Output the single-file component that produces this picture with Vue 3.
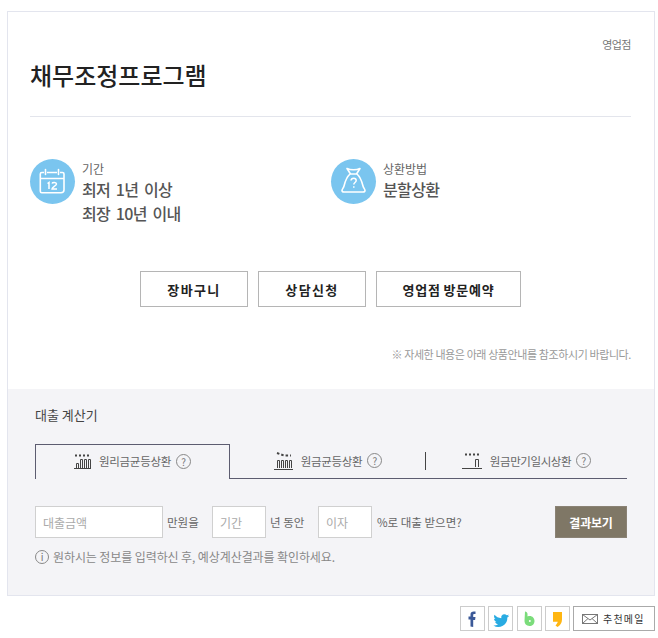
<template>
  <div class="page">
    <section class="card">
      <div class="top">
        <p class="branch">영업점</p>
        <h1 class="title">채무조정프로그램</h1>
        <div class="info">
          <div class="info-item first">
            <span class="round">
              <svg width="45" height="45" viewBox="0 0 45 45" fill="none" stroke="#fff" stroke-width="1.6">
                <path d="M14 13.500h-2.200a1.500 1.500 0 0 0-1.500 1.500v17.200a1.500 1.500 0 0 0 1.500 1.500h19.200a3 3 0 0 0 3-3V15a1.500 1.500 0 0 0-1.500-1.500H30M17 13.500h10M10.500 19.500h23" />
                <path d="M15.500 10.500v5M28.500 10.500v5" stroke-linecap="round" />
                <path d="M17.500 24.500l1.500-1v6.500M22 24.500c.6-1.400 4.500-1.400 4.500.6 0 1.700-4.500 3-4.500 4.800h5" stroke-width="1.500" />
              </svg>
            </span>
            <div>
              <p class="info-label">기간</p>
              <p class="info-value">최저 1년 이상</p>
              <p class="info-value">최장 10년 이내</p>
            </div>
          </div>
          <div class="info-item">
            <span class="round">
              <svg width="45" height="45" viewBox="0 0 45 45" fill="none" stroke="#fff" stroke-width="1.6" stroke-linejoin="round">
                <path d="M16 9.500c2 1 4 1.300 6.500 1.300s4.500-.3 6.500-1.300l-3.500 5.500h-6z" />
                <path d="M19 15c-3.500 3-5 8-6 12-.5 2-2 3-2 4.500 0 1 .7 1.500 2 1.500h19c1.300 0 2-.5 2-1.500 0-1.500-1.500-2.500-2-4.500-1-4-2.500-9-6-12" />
                <path d="M20 21.500c.3-3 5.200-3 5.200 0 0 2-2.400 2-2.400 4M22.800 27.300v1.500" stroke-width="1.500" />
              </svg>
            </span>
            <div>
              <p class="info-label">상환방법</p>
              <p class="info-value strong">분할상환</p>
            </div>
          </div>
        </div>
        <div class="actions">
          <button class="action a1">장바구니</button>
          <button class="action a2">상담신청</button>
          <button class="action a3">영업점 방문예약</button>
        </div>
        <p class="notice">※ 자세한 내용은 아래 상품안내를 참조하시기 바랍니다.</p>
      </div>
      <div class="calc">
        <h2 class="calc-title">대출 계산기</h2>
        <div class="tabs">
          <div class="tab active">
            <svg class="tab-icon" width="17" height="15" viewBox="0 0 17 15" fill="none" stroke="#444">
              <path d="M0 14.500h17" />
              <path d="M2.500 14V9.500h2V14M6.500 14V5.500h2V14M10.500 14V5.500h2V14M14.500 14V5.500h2V14" />
              <path d="M1 1.500h15" stroke-width="2" stroke-dasharray="2 2" />
            </svg>
            <span>원리금균등상환</span>
            <span class="help">?</span>
          </div>
          <div class="tab second">
            <svg class="tab-icon" width="19" height="18" viewBox="0 0 19 18" fill="none" stroke="#444">
              <path d="M0 17.500h19" />
              <path d="M3.500 16V8.500h2V16M7.500 16V8.500h2V16M11.500 16V8.500h2V16M15.500 16V8.500h2V16" />
              <path d="M3 1l7 2.500h7" stroke-width="2" stroke-dasharray="2.500 2" />
            </svg>
            <span>원금균등상환</span>
            <span class="help">?</span>
          </div>
          <div class="tab third">
            <svg class="tab-icon" width="20" height="16" viewBox="0 0 20 16" fill="none" stroke="#444">
              <path d="M0 15.500h20" />
              <path d="M13.500 14V6.500h3V14" />
              <path d="M3 1.500h14" stroke-width="2" stroke-dasharray="2 2" />
            </svg>
            <span>원금만기일시상환</span>
            <span class="help">?</span>
          </div>
        </div>
        <div class="form">
          <input class="field wide" placeholder="대출금액" />
          <span class="unit u1">만원을</span>
          <input class="field short" placeholder="기간" />
          <span class="unit u2">년 동안</span>
          <input class="field short" placeholder="이자" />
          <span class="unit u3">%로 대출 받으면?</span>
          <button class="result">결과보기</button>
        </div>
        <p class="hint"><span class="info-dot">i</span>원하시는 정보를 입력하신 후, 예상계산결과를 확인하세요.</p>
      </div>
    </section>
    <div class="share">
      <a class="sns">
        <svg width="23" height="23" viewBox="0 0 23 23"><path fill="#3b5998" d="M9.500 19.500V12.500H7.500V9.500h2V7.500C9.500 5.300 10.800 4.500 12.800 4.500c.8 0 1.500.1 1.700.1v2.500h-1c-1 0-1.300.5-1.300 1.200v1.700h2.300l-.4 3h-1.900v7z"/></svg>
      </a>
      <a class="sns">
        <svg width="23" height="23" viewBox="0 0 23 23"><path fill="#29abe2" transform="translate(3 4.500) scale(.82)" d="M21 5.200c-.7.300-1.400.5-2.200.6.800-.5 1.400-1.200 1.700-2.100-.8.400-1.600.8-2.500.9a3.900 3.900 0 0 0-6.700 3.500C8 8 5 6.400 3 4c-1 1.800-.5 4 1.200 5.200-.6 0-1.200-.2-1.700-.5 0 1.900 1.300 3.500 3.100 3.900-.6.200-1.200.2-1.800.1.500 1.500 1.900 2.600 3.600 2.700A7.900 7.900 0 0 1 1.700 17a11 11 0 0 0 17-9.800c.9-.5 1.700-1.200 2.300-2z"/></svg>
      </a>
      <a class="sns third-sns">
        <svg width="23" height="23" viewBox="0 0 23 23"><path fill="#7bdc7b" d="M7 4.500c1.300 0 2.500 1 2.500 2.500v2.500c.8-.4 1.500-.5 2.300-.5 2.600 0 4.700 2.300 4.700 5 0 3-2.200 5-5 5-3.100 0-5-2.200-5-5.200z"/><circle cx="11.800" cy="14" r="1" fill="#fff"/></svg>
      </a>
      <a class="sns">
        <svg width="23" height="23" viewBox="0 0 23 23"><path fill="#ffb612" d="M7 5h9v7.500c0 3.500-2 6-4.500 7.500l-2-1.500c1.200-1.300 2-2.400 2.200-3.700H7z"/></svg>
      </a>
      <a class="mail">
        <svg width="16" height="10" viewBox="0 0 16 10" fill="none" stroke="#777"><rect x=".5" y=".5" width="15" height="9"/><path d="M.5.500l7.500 5.500 7.500-5.500M.5 9.500l5.500-5M15.500 9.500l-5.500-5"/></svg>
        <span>추천메일</span>
      </a>
    </div>
  </div>
</template>

<script setup>
</script>

<style>
html, body { margin: 0; background: #fff; }
</style>

<style scoped>
.page {
  width: 658px;
  height: 638px;
  padding: 11px 3px 0 7px;
  box-sizing: border-box;
  font-family: "Noto Sans CJK KR", "Noto Sans", sans-serif;
  color: #555;
  overflow: hidden;
}
p, h1, h2 { margin: 0; }
.card {
  width: 648px;
  height: 585px;
  box-sizing: border-box;
  border: 1px solid #e3e5ee;
  display: flex;
  flex-direction: column;
}
.top {
  height: 377px;
  box-sizing: border-box;
  padding: 24px 23px 0 22px;
}
.branch {
  text-align: right;
  font-size: 11px;
  line-height: 16px;
  color: #777;
  letter-spacing: -0.5px;
}
.title {
  margin-top: 7px;
  height: 57px;
  border-bottom: 1px solid #e3e5ec;
  font-size: 24px;
  line-height: 32px;
  font-weight: 500;
  color: #222;
}
.info {
  display: flex;
  margin-top: 42px;
}
.info-item {
  display: flex;
  gap: 7px;
  align-items: flex-start;
  height: 68px;
}
.info-item.first { width: 301px; }
.round {
  width: 45px;
  height: 45px;
  border-radius: 50%;
  background: #7ac5ef;
  flex: none;
  display: block;
}
.round svg { display: block; }
.info-label {
  font-size: 12px;
  line-height: 16px;
  color: #666;
  margin-top: 2px;
}
.info-value {
  font-size: 16px;
  line-height: 24px;
  font-weight: 500;
  color: #555;
  letter-spacing: -0.6px;
  word-spacing: 2.500px;
}
.actions {
  display: flex;
  justify-content: center;
  gap: 10px;
  margin-top: 44px;
}
.action {
  height: 36px;
  padding: 0;
  background: #fff;
  border: 1px solid #b5b5b5;
  font-family: inherit;
  font-size: 13px;
  font-weight: 700;
  letter-spacing: 1.400px;
  color: #222;
}
.a1 { width: 108px; }
.a2 { width: 108px; }
.a3 { width: 145px; letter-spacing: .8px; word-spacing: -1px; }
.notice {
  margin-top: 39px;
  text-align: right;
  font-size: 11px;
  line-height: 16px;
  color: #999;
  letter-spacing: -0.4px;
}
.calc {
  flex: 1;
  background: #f4f4f7;
  padding: 0 27px 0 27px;
}
.calc-title {
  margin-top: 17px;
  font-size: 13px;
  line-height: 18px;
  font-weight: 400;
  color: #444;
}
.tabs {
  display: flex;
  margin-top: 20px;
  height: 35px;
  box-sizing: border-box;
  border-bottom: 1px solid #5c5c70;
  font-size: 11.500px;
  color: #666;
}
.tab {
  display: flex;
  align-items: center;
  justify-content: center;
  height: 35px;
  box-sizing: border-box;
  padding-bottom: 2px;
  letter-spacing: -0.3px;
}
.tab-icon { margin-right: 8px; flex: none; }
.tab.active {
  width: 195px;
  border: 1px solid #5c5c70;
  border-bottom: 0;
  background: #f4f4f7;
}
.tab.second {
  width: 196px;
  position: relative;
}
.tab.second::after {
  content: "";
  position: absolute;
  right: 0;
  top: 8px;
  height: 18px;
  width: 1px;
  background: #444;
}
.tab.third { flex: 1; letter-spacing: -0.4px; }
.help {
  width: 13px;
  height: 13px;
  border: 1px solid #888;
  border-radius: 50%;
  margin-left: 5px;
  font-size: 10px;
  line-height: 13px;
  text-align: center;
  color: #777;
}
.form {
  display: flex;
  align-items: center;
  margin-top: 27px;
  height: 32px;
  font-size: 11.500px;
  color: #666;
}
.field {
  height: 32px;
  box-sizing: border-box;
  padding: 1px 7px 0;
  border: 1px solid #d0d0d0;
  background: #fff;
  font-family: inherit;
  font-size: 12px;
  color: #555;
}
.field::placeholder { color: #aaa; opacity: 1; }
.wide { width: 128px; }
.short { width: 54px; }
.unit { white-space: nowrap; padding-bottom: 1px; }
.u1 { margin: 0 13px 0 4px; width: 32px; }
.u2 { margin: 0 13px 0 4px; width: 35px; }
.u3 { margin-left: 5px; }
.result {
  margin-left: auto;
  width: 72px;
  height: 32px;
  padding: 0;
  background: #7f7766;
  border: 1px solid #8a8275;
  font-family: inherit;
  font-size: 12px;
  letter-spacing: -0.2px;
  font-weight: 700;
  color: #fff;
}
.hint {
  display: flex;
  align-items: center;
  margin-top: 10px;
  font-size: 12px;
  line-height: 18px;
  letter-spacing: -0.1px;
  color: #888;
}
.info-dot {
  width: 12px;
  height: 12px;
  border: 1px solid #888;
  border-radius: 50%;
  margin-right: 4px;
  font-size: 10px;
  line-height: 12px;
  text-align: center;
  color: #777;
}
.share {
  display: flex;
  justify-content: flex-end;
  gap: 3px;
  margin-top: 10px;
  width: 648px;
}
.sns {
  width: 25px;
  height: 25px;
  box-sizing: border-box;
  border: 1px solid #ccc;
  background: #fff;
  display: block;
}
.third-sns { margin-left: 1px; }
.sns svg { display: block; }
.mail {
  width: 82px;
  height: 25px;
  box-sizing: border-box;
  border: 1px solid #aaa;
  display: flex;
  align-items: center;
  gap: 5px;
  padding-left: 8px;
  font-size: 10px;
  letter-spacing: 1.200px;
  color: #333;
}
</style>
